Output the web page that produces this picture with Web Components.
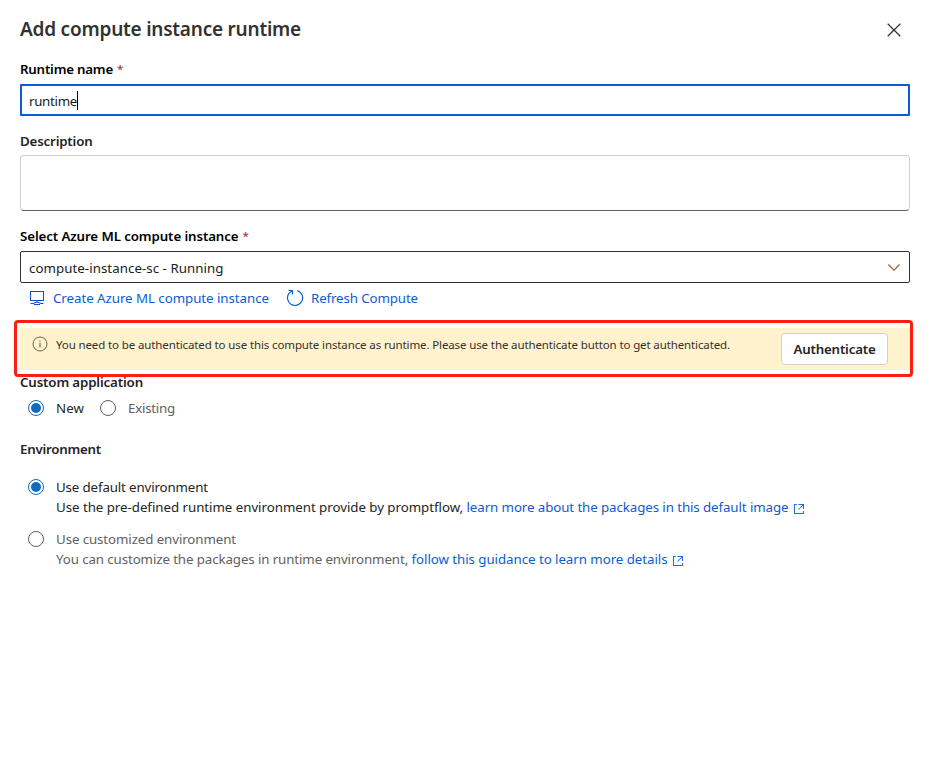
<!DOCTYPE html>
<html lang="en">
<head>
<meta charset="utf-8">
<title>Add compute instance runtime</title>
<style>
html,body{margin:0;background:#fff}
body{font:13.3px/20px "Noto Sans","Open Sans",sans-serif;color:#242424;height:759px;overflow:hidden}
</style>
</head>
<body>
<runtime-panel></runtime-panel>
<script>
const define = (name, html, setup) => {
  const t = document.createElement('template');
  t.innerHTML = html;
  customElements.define(name, class extends HTMLElement {
    constructor() {
      super();
      this.attachShadow({mode: 'open'}).append(t.content.cloneNode(true));
    }
    connectedCallback() { if (setup) setup(this, this.shadowRoot); }
  });
};

/* A single line of text, tracked so that it takes up the advance given in "w". */
define('ui-text', `<style>
:host{display:inline-block;white-space:pre;flex:none}
:host([strong]){font-weight:600}
:host([link]){color:#0b5cd5}
span{display:inline-block}
</style><span><slot></slot></span>`, (el, root) => {
  const w = +el.getAttribute('w');
  if (!w) return;
  const s = root.querySelector('span');
  const n = el.textContent.length;
  s.style.letterSpacing = ((w - s.getBoundingClientRect().width) / n) + 'px';
  el.style.width = w + 'px';
});

const icons = {
  close: [14, 14, '<path d="M.7.7l12.6 12.6M13.3.7L.7 13.3" stroke="#333" stroke-width="1.25"/>'],
  chevron: [12, 7, '<path d="M.4.5L6 6.100 11.6.5" stroke="#97633b" stroke-width="1.15"/>'],
  monitor: [14, 15, '<path d="M.5 1.500h13v9h-13zM7 10.500v2M.5 13.500h2.500M11 13.500h2.500M4 14.500h6M3 13.500L7 12l4 1.500" stroke="#0b52c8" stroke-width="1.050"/>'],
  refresh: [18, 18, '<path d="M11.300 1.600A7.600 7.600 0 1 1 3.300 3.900L6.300 1.700M2.500 1.500h4v4" stroke="#0b5cd5" stroke-width="1.150"/>'],
  info: [16, 16, '<circle cx="8" cy="8" r="7" stroke="#6b6553"/><path d="M8 6.800v4.700M8 4.400v1.200" stroke="#6b6553" stroke-width="1.100"/>'],
  external: [12, 12, '<path d="M4 1.500H1.500v9h9V8M5.500 1.500h5v4.500M10.500 1.500L5.500 6.500" stroke="#2b6bd9" stroke-width="1.050"/>']
};
define('ui-icon', `<style>:host{display:block;flex:none}svg{display:block}</style><svg fill="none"></svg>`, (el, root) => {
  const [w, h, body] = icons[el.getAttribute('name')];
  const svg = root.querySelector('svg');
  svg.setAttribute('width', w);
  svg.setAttribute('height', h);
  svg.setAttribute('viewBox', `0 0 ${w} ${h}`);
  svg.innerHTML = body;
});

define('field-label', `<style>
:host{display:flex;height:20px;gap:4px;color:#242424}
:host([dark]){color:#000}
i{font-style:normal;font-size:11.500px;color:#a4262c;display:none}
:host([required]) i{display:block}
</style><slot></slot><i>*</i>`);

define('text-field', `<style>
:host{display:flex;align-items:center;box-sizing:border-box;height:32px;border:2px solid #0b5cd9;border-radius:1px;padding:2px 7px 0;color:#1b1b1b}
b{width:1px;height:19px;background:#000;margin:-2px 0 0}
</style><slot></slot><b></b>`);

define('text-box', `<style>
:host{display:block;box-sizing:border-box;height:56px;border:1px solid #d1d1d1;border-bottom-color:#616161;border-radius:4px}
</style>`);

define('select-box', `<style>
:host{display:flex;align-items:center;justify-content:space-between;box-sizing:border-box;height:32px;border:1px solid #323130;border-radius:2px;padding:2px 9px 0 8px;color:#1b1b1b}
ui-icon{margin-top:-2px}
</style><slot></slot><ui-icon name="chevron"></ui-icon>`);

define('notice-bar', `<style>
:host{display:flex;box-sizing:border-box;margin:0 -3px 0 -6px;height:57px;border:3px solid #ff1d0f;border-radius:4px;padding:5px 0 4px 3px;background:#fff}
div{display:flex;flex:1;background:#fff2cd;align-items:flex-start;padding:0 22px 0 11.500px;box-sizing:border-box;height:42px}
ui-icon{margin:7.500px 8.500px 0 0}
.msg{margin-top:9px;font-size:11.500px;line-height:16px;color:#323130;flex:1}
</style><div><ui-icon name="info"></ui-icon><span class="msg"><slot></slot></span><slot name="action"></slot></div>`);

define('push-button', `<style>
:host{display:flex;align-items:center;justify-content:center;box-sizing:border-box;width:107px;height:32px;border:1px solid #d1d1d1;border-radius:4px;background:#fff;font-weight:600;margin-top:5px;color:#242424}
</style><slot></slot>`);

define('radio-option', `<style>
:host{display:flex;align-items:flex-start;color:#616161}
:host([checked]){color:#242424}
b{box-sizing:border-box;width:16px;height:16px;border:1px solid #616161;border-radius:50%;margin:2px 12px 0 0;display:flex;align-items:center;justify-content:center;flex:none}
:host([checked]) b{border-color:#0f6cbd}
:host([checked]) b::after{content:"";width:10px;height:10px;border-radius:50%;background:#0f6cbd}
div{display:flex;flex-direction:column}
</style><b></b><div><slot></slot></div>`);

define('inline-row', `<style>:host{display:flex;height:20px}::slotted(ui-icon){margin:6px 0 0 4.500px}</style><slot></slot>`);

define('runtime-panel', `<style>
:host{display:flex;flex-direction:column;padding:15px 19px 0 20px;height:759px;box-sizing:border-box}
header{display:flex;justify-content:space-between;height:28px;font-size:19px;line-height:28px;color:#323130;padding-right:9px;margin-bottom:16px}
header ui-icon{margin-top:8px}
text-field{margin:5px 0 15px}
text-box{margin:4px 0 15px}
select-box{margin:5px 0}
.actions{display:flex;height:20px;padding-left:10px;margin-bottom:12px}
.actions ui-icon{margin:2px 9px 0 0}
.actions ui-icon.r{margin:1px 7px 0 17px}
notice-bar{margin-bottom:-5px;z-index:1}
.pair{display:flex;gap:16px;padding:6px 0 21px 8px}
.env{display:flex;flex-direction:column;gap:12px;padding:18px 0 0 8px}
</style>
<header><ui-text strong w="281">Add compute instance runtime</ui-text><ui-icon name="close"></ui-icon></header>
<field-label dark required><ui-text strong w="93">Runtime name</ui-text></field-label>
<text-field><ui-text w="48">runtime</ui-text></text-field>
<field-label><ui-text strong w="72.500">Description</ui-text></field-label>
<text-box></text-box>
<field-label dark required><ui-text strong w="218.500">Select Azure ML compute instance</ui-text></field-label>
<select-box><ui-text w="194.500">compute-instance-sc - Running</ui-text></select-box>
<div class="actions"><ui-icon name="monitor"></ui-icon><ui-text link w="216">Create Azure ML compute instance</ui-text><ui-icon class="r" name="refresh"></ui-icon><ui-text link w="107">Refresh Compute</ui-text></div>
<notice-bar><ui-text w="674">You need to be authenticated to use this compute instance as runtime. Please use the authenticate button to get authenticated.</ui-text><push-button slot="action"><ui-text w="82">Authenticate</ui-text></push-button></notice-bar>
<field-label><ui-text strong w="123">Custom application</ui-text></field-label>
<div class="pair"><radio-option checked><ui-text w="28">New</ui-text></radio-option><radio-option><ui-text w="47">Existing</ui-text></radio-option></div>
<field-label><ui-text strong w="81">Environment</ui-text></field-label>
<div class="env">
<radio-option checked><ui-text w="152">Use default environment</ui-text><inline-row><ui-text w="410.500">Use the pre-defined runtime environment provide by promptflow, </ui-text><ui-text link w="322">learn more about the packages in this default image</ui-text><ui-icon name="external"></ui-icon></inline-row></radio-option>
<radio-option><ui-text w="180">Use customized environment</ui-text><inline-row><ui-text w="355.500">You can customize the packages in runtime environment, </ui-text><ui-text link w="256">follow this guidance to learn more details</ui-text><ui-icon name="external"></ui-icon></inline-row></radio-option>
</div>`);
</script>
</body>
</html>
